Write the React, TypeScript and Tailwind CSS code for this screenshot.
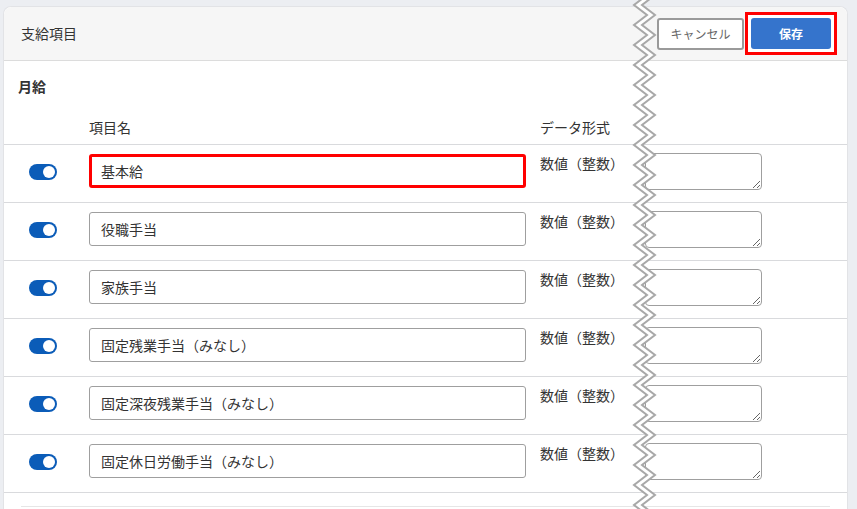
import React from "react";

const ITEMS = [
  "基本給",
  "役職手当",
  "家族手当",
  "固定残業手当（みなし）",
  "固定深夜残業手当（みなし）",
  "固定休日労働手当（みなし）",
];

function Toggle() {
  return (
    <span className="flex h-4 w-7 items-center justify-end rounded-full bg-[#0b5cb8] pr-[2px]">
      <span className="h-3 w-3 rounded-full bg-white" />
    </span>
  );
}

// the cut mark between the two halves of the page
function BreakBand() {
  const left: string[] = [];
  const right: string[] = [];
  for (let y = -15; y <= 525; y += 10) {
    const x = ((y + 15) / 10) % 2 === 0 ? 2 : 15;
    left.push(`${x},${y}`);
    right.push(`${x + 8},${y}`);
  }
  const band = [...left, ...[...right].reverse()].join(" ");
  return (
    <svg
      className="pointer-events-none absolute top-0 left-[632px]"
      width="26"
      height="509"
      viewBox="0 0 26 509"
    >
      <polygon points={band} fill="#ffffff" />
      <polyline points={left.join(" ")} fill="none" stroke="#a8a8a8" strokeWidth="2" />
      <polyline points={right.join(" ")} fill="none" stroke="#a8a8a8" strokeWidth="2" />
    </svg>
  );
}

export default function App() {
  return (
    <div
      className="relative h-[509px] w-[857px] overflow-hidden bg-[#eceef2] pt-[6px] pr-[9px] pl-[3px] text-[#333]"
      style={{ fontFamily: '"Noto Sans CJK JP", "Noto Sans", sans-serif' }}
    >
      <div className="h-full rounded-t-lg border border-b-0 border-[#e2e3e6] bg-white">
        <div className="flex h-[54px] items-center justify-between rounded-t-lg border-b border-[#dcdcdc] bg-[#f6f6f6] pr-[10px] pl-[17px]">
          <h1 className="text-[14px]">支給項目</h1>
          <div className="flex items-center gap-[1px]">
            <button className="h-8 w-[87px] rounded-[3px] border-2 border-[#9a9a9a] bg-white text-[12px] text-[#666]">
              キャンセル
            </button>
            <span className="border-[3px] border-[#ff0000] bg-white p-[3px]">
              <button className="block h-[31px] w-20 rounded-[3px] bg-[#3574cc] text-[12px] font-bold text-white">
                保存
              </button>
            </span>
          </div>
        </div>

        <div className="pt-[15px]">
          <h2 className="pl-[14px] text-[14px] leading-5 font-bold">月給</h2>
          <div className="mt-[21px] flex border-b border-[#d9dadd] pb-[7px] text-[14px] leading-5">
            <span className="w-[85px]" />
            <span className="w-[451px]">項目名</span>
            <span>データ形式</span>
          </div>

          {ITEMS.map((name, i) => (
            <div
              key={name}
              className="flex items-start border-b border-[#d9dadd] pt-[8px] pb-[12px] text-[14px]"
            >
              <div className="flex w-[85px] justify-center pt-[11px] pr-[7px]">
                <Toggle />
              </div>
              <input
                readOnly
                value={name}
                className={`mt-[1px] h-[34px] w-[437px] rounded-[3px] bg-white px-[11px] text-[14px] text-[#333] outline-none ${
                  i === 0
                    ? "border-[3px] border-[#ff0000] pl-[9px]"
                    : "border border-[#9f9f9f]"
                }`}
              />
              <span className="ml-[14px] w-[105px] leading-5">数値（整数）</span>
              <textarea
                readOnly
                className="h-[37px] w-[117px] rounded-[4px] border border-[#9f9f9f] bg-white outline-none"
              />
            </div>
          ))}

          <div className="mx-[17px] mt-[13px] border-t border-[#e6e6e6]" />
        </div>
      </div>
      <BreakBand />
    </div>
  );
}
